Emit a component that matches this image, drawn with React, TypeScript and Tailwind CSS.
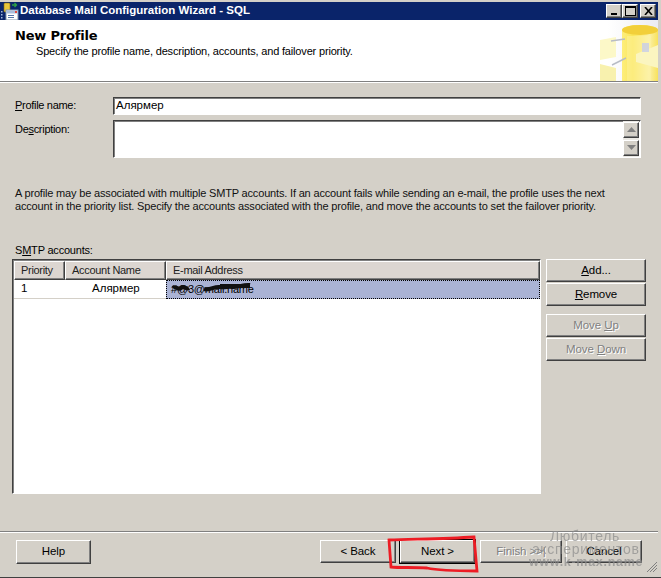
const Bevel = "border border-t-white border-l-white border-r-[#404040] border-b-[#404040] shadow-[inset_-1px_-1px_0_#808080]";
const Sunken = "border border-t-[#404040] border-l-[#404040] border-r-white border-b-white bg-white outline outline-1 outline-[#d4d0c8] shadow-[inset_1px_1px_0_#808080]";

function U({ children }: { children: React.ReactNode }) {
  return <span className="underline underline-offset-1">{children}</span>;
}

function Btn({ className = "", disabled = false, children }: { className?: string; disabled?: boolean; children: React.ReactNode }) {
  return (
    <div className={`flex items-center justify-center text-[11.5px] tracking-[-0.1px] ${Bevel} ${disabled ? "text-[#808080] [text-shadow:1px_1px_0_#fff]" : "text-black"} ${className}`}>
      <span>{children}</span>
    </div>
  );
}

function Head({ className = "", children }: { className?: string; children: React.ReactNode }) {
  return (
    <div className={`flex h-[19px] items-center bg-[#dcd6d1] pl-[6px] text-[11px] tracking-[-0.3px] text-[#222] ${Bevel} ${className}`}>
      {children}
    </div>
  );
}

function TitleIcon() {
  return (
    <svg width="18" height="18" viewBox="0 0 18 18" className="shrink-0">
      <rect x="0" y="9" width="1.5" height="1.5" fill="#9fb6d8" />
      <rect x="0" y="12" width="1.5" height="1.5" fill="#9fb6d8" />
      <rect x="0" y="15" width="1.5" height="1.5" fill="#9fb6d8" />
      <rect x="3" y="1" width="6" height="9" rx="1" fill="#e8c53a" stroke="#8a6d10" strokeWidth="0.6" />
      <path d="M11 3h4M13.5 1l2 2-2 2" stroke="#2ea043" strokeWidth="1.3" fill="none" />
      <rect x="5" y="8" width="12" height="10" fill="#fff" stroke="#7f93ad" />
      <rect x="5.5" y="8.5" width="11" height="3" fill="#a9bedc" />
      <rect x="7" y="13" width="6" height="1" fill="#5877a8" />
      <rect x="7" y="15" width="6" height="1" fill="#5877a8" />
      <rect x="14" y="9" width="2" height="2" fill="#e2483d" />
    </svg>
  );
}

function Banner() {
  return (
    <svg width="58" height="61" viewBox="0 0 58 61" className="shrink-0">
      <defs>
        <linearGradient id="cyl" x1="0" x2="1" y1="0" y2="0">
          <stop offset="0" stopColor="#fdee7c" />
          <stop offset="0.3" stopColor="#fbe65a" />
          <stop offset="0.75" stopColor="#fbf0a8" />
          <stop offset="1" stopColor="#f8e25c" />
        </linearGradient>
        <linearGradient id="bg" x1="0" x2="1" y1="0" y2="0">
          <stop offset="0" stopColor="#ffffff" />
          <stop offset="1" stopColor="#ececf2" />
        </linearGradient>
      </defs>
      <rect x="8" y="0" width="50" height="61" fill="url(#bg)" />
      <path d="M22 10c0-3 8-5 18-5s18 2 18 5v51H22z" fill="url(#cyl)" />
      <ellipse cx="40" cy="10" rx="18" ry="5" fill="#f2cf3a" />
      <rect x="27" y="16" width="24" height="45" fill="#fdf5a8" opacity="0.45" />
      <path d="M0 20l16-3v20L0 40z" fill="#fcf8c8" />
      <path d="M0 44l16 4v13H0z" fill="#f8f1ae" />
      <path d="M36 34l22-9v23l-22-6z" fill="#fbf5c0" />
      <rect x="42" y="23" width="7" height="9" fill="#c9cfe6" opacity="0.85" />
      <path d="M11 21l14-2" stroke="#b8bcc6" strokeWidth="1.5" />
      <path d="M12 45l14-7" stroke="#b8bcc6" strokeWidth="1.5" />
    </svg>
  );
}

function Arrow({ up }: { up?: boolean }) {
  return (
    <div className={`flex h-[16px] w-[16px] items-center justify-center bg-[#d4d0c8] ${Bevel}`}>
      <svg width="9" height="6" viewBox="0 0 9 6">
        <path d={up ? "M4.5 0L9 5H0z" : "M0 0h9L4.5 5z"} fill="#808080" />
      </svg>
    </div>
  );
}

export default function App() {
  return (
    <div className="relative flex h-[578px] w-[661px] flex-col overflow-hidden border-b border-b-[#404040] bg-[#d4d0c8] pt-[2px] pr-[3px] font-['Liberation_Sans',sans-serif] text-[11.5px] text-black">
      {/* Title bar */}
      <div className="flex h-[18px] shrink-0 items-center bg-[#0a246a] pl-[1px] pr-[2px]">
        <TitleIcon />
        <span className="ml-[1px] text-[11.5px] font-bold leading-none text-white">Database Mail Configuration Wizard - SQL</span>
        <div className="ml-auto flex">
          <div className={`flex h-[14px] w-[16px] items-end justify-center bg-[#d4d0c8] pb-[2px] ${Bevel}`}>
            <div className="h-[2px] w-[6px] bg-black" />
          </div>
          <div className={`flex h-[14px] w-[16px] items-center justify-center bg-[#d4d0c8] ${Bevel}`}>
            <div className="h-[10px] w-[11px] border border-t-2 border-black" />
          </div>
          <div className={`ml-[2px] flex h-[14px] w-[16px] items-center justify-center bg-[#d4d0c8] ${Bevel}`}>
            <svg width="9" height="8" viewBox="0 0 9 8"><path d="M1 0l7 8M8 0L1 8" stroke="#000" strokeWidth="1.6" /></svg>
          </div>
        </div>
      </div>

      {/* Header */}
      <div className="flex h-[61px] shrink-0 justify-between bg-white">
        <div className="pl-[15px] pt-[8px]">
          <div className="font-['DejaVu_Sans',sans-serif] text-[13px] font-bold leading-[16px] tracking-[-0.2px]">New Profile</div>
          <div className="pl-[21px] text-[11px] leading-[14px] tracking-[-0.17px]">Specify the profile name, description, accounts, and failover priority.</div>
        </div>
        <Banner />
      </div>
      <div className="h-[2px] shrink-0 border-t border-t-[#808080] border-b border-b-white" />

      {/* Form */}
      <div className="flex flex-1 flex-col pl-[15px] pr-[12px] pt-[13px]">
        <div className="flex h-[19px] items-center pr-[5px]">
          <div className="w-[98px] text-[11px] tracking-[-0.3px]"><U>P</U>rofile name:</div>
          <div className={`flex h-[18px] flex-1 items-center pl-[2px] ${Sunken}`}>Алярмер</div>
        </div>
        <div className="mt-[5px] flex pr-[5px]">
          <div className="w-[98px] pt-[1px] text-[11px] tracking-[-0.3px]">De<U>s</U>cription:</div>
          <div className={`flex h-[38px] flex-1 justify-end ${Sunken}`}>
            <div className="mr-[1px] flex w-[16px] flex-col justify-between bg-[#ebe9e4] py-[1px]">
              <Arrow up />
              <Arrow />
            </div>
          </div>
        </div>

        <p className="mt-[29px] w-[610px] text-[11px] leading-[13px] tracking-[-0.17px] text-[#111]">
          A profile may be associated with multiple SMTP accounts. If an account fails while sending an e-mail, the profile uses the next account in the priority list. Specify the accounts associated with the profile, and move the accounts to set the failover priority.
        </p>

        <div className="mt-[30px] text-[11px] leading-[14px] tracking-[-0.2px]">S<U>M</U>TP accounts:</div>

        <div className="mt-[2px] flex">
          {/* Table */}
          <div className="-ml-[3px] h-[235px] w-[529px] shrink-0 border border-t-[#404040] border-l-[#404040] border-r-white border-b-white bg-white pl-[1px] pt-[1px] shadow-[inset_1px_1px_0_#808080]">
            <div className="flex">
              <Head className="w-[51px]">Priority</Head>
              <Head className="w-[101px]">Account Name</Head>
              <Head className="flex-1">E-mail Address</Head>
            </div>
            <div className="flex h-[19px] items-center border-b border-b-[#d4d0c8]">
              <div className="w-[51px] pl-[7px]">1</div>
              <div className="w-[101px] pl-[27px]">Алярмер</div>
              <div className="relative flex h-[19px] flex-1 items-center border border-dotted border-black bg-[#aab3d5] pl-[4px] text-[11px] tracking-[-0.2px]">
                #@3@mail.name
                <svg width="90" height="14" viewBox="0 0 90 14" className="absolute left-[3px] top-[1px]">
                  <path d="M3 6c3-3 5 3 8 0s5 2 8 0" stroke="#111" strokeWidth="4" fill="none" />
                  <path d="M34 7c6 2 10-3 16-2s8-1 12 0 12-3 18-2" stroke="#111" strokeWidth="4" fill="none" />
                  <path d="M50 4h30" stroke="#111" strokeWidth="4" />
                </svg>
              </div>
            </div>
          </div>

          {/* Side buttons */}
          <div className="ml-[5px] flex w-[100px] shrink-0 flex-col">
            <Btn className="h-[23px]"><U>A</U>dd...</Btn>
            <Btn className="mt-px h-[23px]"><U>R</U>emove</Btn>
            <Btn disabled className="mt-[8px] h-[23px]">Move <U>U</U>p</Btn>
            <Btn disabled className="mt-px h-[23px]">Move <U>D</U>own</Btn>
          </div>
        </div>
      </div>

      {/* Footer */}
      <div className="h-[2px] shrink-0 border-t border-t-[#808080] border-b border-b-white" />
      <div className="flex h-[44px] shrink-0 items-start pl-[16px] pt-[7px]">
        <Btn className="h-[24px] w-[75px]">Help</Btn>
        <Btn className="ml-[229px] h-[23px] w-[76px]">&lt; Back</Btn>
        <Btn className="ml-[4px] h-[23px] w-[75px] outline outline-1 outline-black">Next &gt;</Btn>
        <Btn disabled className="ml-[5px] h-[23px] w-[82px]">Finish &gt;&gt;|</Btn>
        <Btn className="ml-[4px] h-[23px] w-[76px]">Cancel</Btn>
      </div>

      {/* Hand-drawn highlight */}
      <svg width="100" height="50" viewBox="0 0 100 50" className="pointer-events-none absolute left-[385px] top-[530px]">
        <path d="M4 10C30 9 60 9 89 7L92 41C72 41 55 41 42 38 28 37 15 38 6 37L4 10z" fill="none" stroke="#ed1c24" strokeWidth="2.8" />
      </svg>

      {/* Watermark */}
      <div className="pointer-events-none absolute left-[526px] top-[530px] w-[120px] whitespace-nowrap text-center text-[14px] leading-[13px] tracking-[0.7px] text-[#8c8c8c] opacity-70">
        <div className="pr-[2px]">Любитель</div>
        <div>экспериментов</div>
        <div className="text-[12.5px] font-bold">www.k-max.name</div>
      </div>

      {/* Grip */}
      <svg width="12" height="12" viewBox="0 0 12 12" className="absolute bottom-[4px] right-[3px]">
        <path d="M11 1L1 11M11 4L4 11M11 7L7 11" stroke="#808080" strokeWidth="1" />
      </svg>
    </div>
  );
}
